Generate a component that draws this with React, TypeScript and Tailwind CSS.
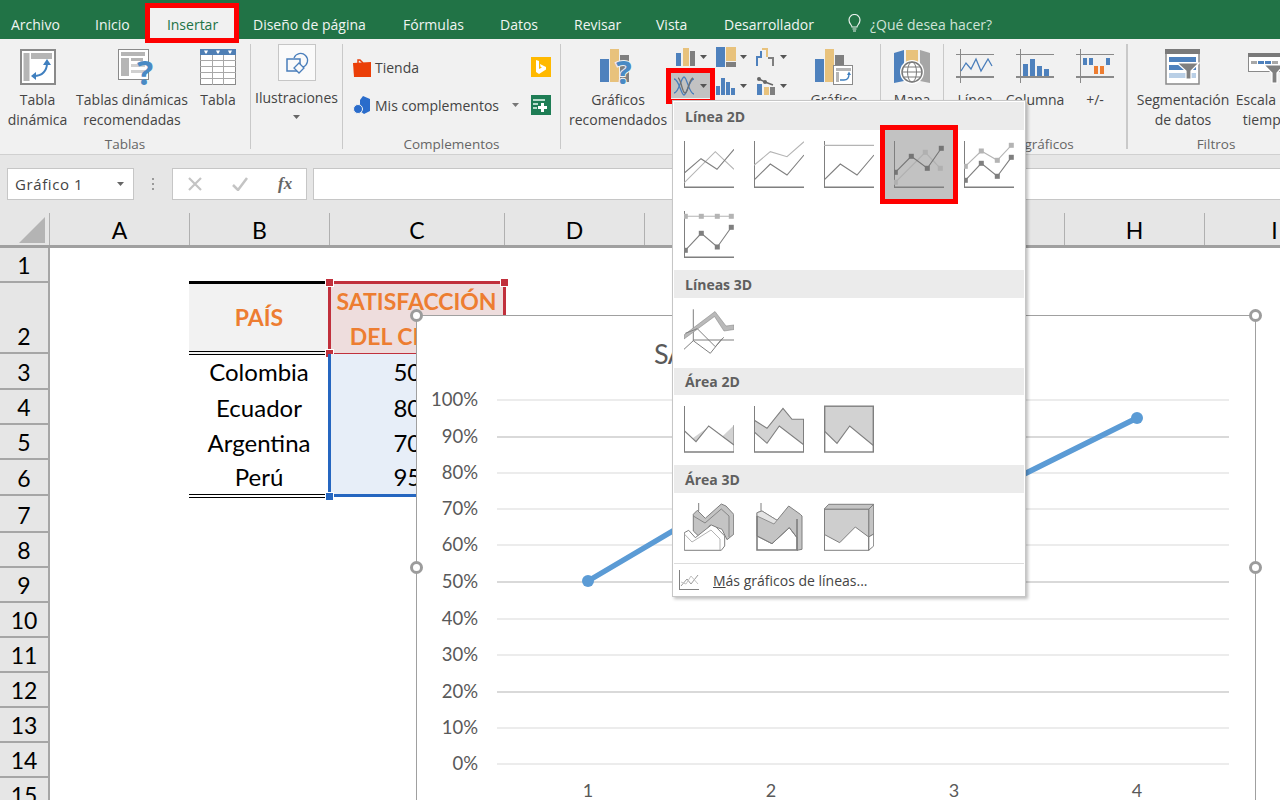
import React from "react";

const D = "#7f7f7f";
const L = "#b4b4b4";
const B = "#4e81bd";
const Y = "#e8c27c";
const G = "#7f7f7f";

type P = [number, number][];
const pts = (p: P) => p.map((q) => q.join(",")).join(" ");

function Poly({ p, c = D, w = 1.1 }: { p: P; c?: string; w?: number }) {
  return <polyline points={pts(p)} fill="none" stroke={c} strokeWidth={w} />;
}
function Marks({ p, c = D }: { p: P; c?: string }) {
  return (
    <>
      <polyline points={pts(p)} fill="none" stroke={c} strokeWidth={1.1} />
      {p.map((q, i) => (
        <rect key={i} x={q[0] - 2.5} y={q[1] - 2.5} width={5} height={5} fill={c} />
      ))}
    </>
  );
}
function Axes({ top = 1 }: { top?: number }) {
  return (
    <>
      <line x1={0.5} y1={top} x2={0.5} y2={48} stroke={D} strokeWidth={1} />
      <line x1={0} y1={47.3} x2={50} y2={47.3} stroke={D} strokeWidth={1.6} />
    </>
  );
}
function Ico({ children }: { children: React.ReactNode }) {
  return (
    <svg width={50} height={50} viewBox="0 0 50 50" className="block">
      {children}
    </svg>
  );
}

const dk2: P = [[0, 40], [16.3, 24], [33, 35], [50, 15]];

const lineIcons = [
  <Ico key="a">
    <Axes />
    <Poly c={L} p={[[0.3, 42.7], [31.3, 11.7], [50, 29.3]]} />
    <Poly p={[[0.3, 33], [17, 18.7], [33, 29.3], [50, 9.3]]} />
  </Ico>,
  <Ico key="b">
    <Axes />
    <Poly c={L} p={[[0, 25.3], [16.3, 11.7], [33, 16.7], [50, 1.7]]} />
    <Poly p={dk2} />
  </Ico>,
  <Ico key="c">
    <Axes />
    <line x1={0} y1={5.3} x2={50} y2={5.3} stroke={L} strokeWidth={1.2} />
    <Poly p={dk2} />
  </Ico>,
  <Ico key="d">
    <Axes />
    <Marks c="#b0b0b0" p={[[1.3, 42.3], [31.3, 12.3], [46.3, 28.3]]} />
    <Marks c="#757575" p={[[1.3, 32.3], [17.3, 16.3], [33.3, 28.3], [47.3, 8.3]]} />
  </Ico>,
  <Ico key="e">
    <Axes />
    <Marks c={L} p={[[1.3, 26.3], [17.3, 11], [33.3, 20.3], [47.3, 5.3]]} />
    <Marks p={[[1.3, 40.3], [17.3, 23.3], [33.3, 36.3], [47.3, 17.3]]} />
  </Ico>,
  <Ico key="f">
    <Axes />
    <Marks c={L} p={[[1.3, 6.3], [17.3, 6.3], [33.3, 6.3], [47.3, 6.3]]} />
    <Marks p={[[1.3, 40.3], [17.3, 23.3], [33.3, 37], [47.3, 17.3]]} />
  </Ico>,
];

const line3d = (
  <Ico>
    <line x1={9.3} y1={1.3} x2={9.3} y2={33} stroke={D} />
    <line x1={9.3} y1={32} x2={50} y2={32} stroke={D} />
    <polygon points="0,27 31,3.5 42,18 50,17 50,21.5 40,23 30.5,8.5 0,31" fill="#b9b9b9" stroke="#8c8c8c" strokeWidth={0.6} />
    <Poly p={[[1.3, 25.3], [13.3, 20.7], [31.3, 38.7], [39.7, 29.3]]} w={1} />
    <Poly p={[[0, 41.3], [9.3, 32.7], [26.3, 45.3], [38, 30.7]]} w={1} />
  </Ico>
);

const AF = "#d2d2d2";
const area2d = [
  <Ico key="a">
    <polygon points="8.7,33.3 24.7,21.7 12,36.7" fill={AF} />
    <polygon points="38,31.7 50,20.3 50,40" fill={AF} />
    <Poly p={[[0.3, 25.7], [12, 36.7], [24.7, 21], [50, 40]]} />
    <line x1={0.5} y1={1} x2={0.5} y2={47} stroke={D} />
    <line x1={50} y1={20} x2={50} y2={47} stroke={D} />
    <line x1={0} y1={47} x2={50} y2={47} stroke={D} strokeWidth={1.4} />
  </Ico>,
  <Ico key="b">
    <polygon points="0,15 13,23.3 29,3.3 38,14.3 50,14.3 50,40 25.3,21 13,38.3 0,26.7" fill={AF} />
    <Poly p={[[0, 15], [13, 23.3], [29, 3.3], [38, 14.3], [50, 14.3]]} />
    <Poly p={[[0, 26.7], [13, 38.3], [25.3, 21], [50, 40]]} />
    <line x1={0.5} y1={1} x2={0.5} y2={47} stroke={D} />
    <line x1={49.5} y1={14} x2={49.5} y2={47} stroke={D} />
    <line x1={0} y1={47} x2={50} y2={47} stroke={D} strokeWidth={1.4} />
  </Ico>,
  <Ico key="c">
    <polygon points="0,1 50,1 50,41 25.7,21 13,38.3 0,25.7" fill={AF} />
    <Poly p={[[0, 25.7], [13, 38.3], [25.7, 21], [50, 41]]} />
    <rect x={0.7} y={1.2} width={48.6} height={45.8} fill="none" stroke={D} strokeWidth={1.4} />
  </Ico>,
];

const area3d = [
  <Ico key="a">
    <line x1={14.7} y1={0} x2={14.7} y2={8} stroke={D} />
    <polygon points="9.3,11.3 13.3,7.3 21.3,15.3 37.3,1 42,3 49.7,11.3 49.7,31.3 43,36.7 38,26.3 26.3,22 16.3,34.7 9.3,28" fill="#c4c4c4" stroke={D} strokeWidth={1} />
    <Poly p={[[9.3, 13], [21, 20], [37.3, 6], [45, 13], [45, 34]]} w={0.9} />
    <polygon points="0.3,29.7 4.7,27.3 11.3,34.7 27.3,22 32,24 40.7,33 40.7,43 37.3,47.3 0.3,47.3" fill="#fff" stroke={D} strokeWidth={1} />
    <Poly p={[[0.3, 31], [8, 39], [27, 27], [36, 36], [36, 47]]} w={0.8} c="#a0a0a0" />
  </Ico>,
  <Ico key="b">
    <line x1={7} y1={0} x2={7} y2={8} stroke={D} />
    <polygon points="3,9.7 8,8 23,17.3 34.7,3 46.3,11.3 48,13 48,46.3 43,47.3 43,34.7 35.3,24.7 18,40.7 3,33" fill="#c4c4c4" stroke={D} strokeWidth={1} />
    <polygon points="3,13 3,9.7 8,8 23,17.3 20,21" fill="#e4e4e4" stroke={D} strokeWidth={0.8} />
    <polyline points="3,33 18,40.7 35.3,24.7 43,34.7" fill="none" stroke={D} />
    <polyline points="3,13 3,47 43,47 43,16" fill="none" stroke={D} strokeWidth={1.6} />
  </Ico>,
  <Ico key="c">
    <polygon points="0,6.3 4.7,1.3 49.7,1.3 44.7,6.3" fill="#c4c4c4" stroke={D} />
    <polygon points="44.7,6.3 49.7,1.3 49.7,31 44.7,34" fill="#c4c4c4" stroke={D} />
    <polygon points="44.7,34 49.7,31 49.7,43 44.7,47.3" fill="#fff" stroke={D} />
    <polygon points="0,6.3 44.7,6.3 44.7,34 31.3,24 15.7,39.7 0,31.3" fill="#cecece" />
    <rect x={0.5} y={6.3} width={44.2} height={41} fill="none" stroke={D} />
    <polyline points="0,31.3 15.7,39.7 31.3,24 44.7,34" fill="none" stroke={D} />
  </Ico>,
];

function Caret({ c = "#555" }: { c?: string }) {
  return (
    <svg width={7} height={4} viewBox="0 0 7 4" className="block shrink-0">
      <polygon points="0,0 7,0 3.5,4" fill={c} />
    </svg>
  );
}

function S36({ children, w = 36, h = 36, className = "" }: { children: React.ReactNode; w?: number; h?: number; className?: string }) {
  return (
    <svg width={w} height={h} viewBox={`0 0 ${w} ${h}`} className={`block shrink-0 overflow-visible ${className}`}>
      {children}
    </svg>
  );
}

const PivotIcon = (
  <S36>
    <rect x={1} y={1} width={34} height={34} fill="#fff" stroke="#8a8a8a" strokeWidth={2} />
    <rect x={3.5} y={4} width={6} height={28} fill="#b5b5b5" />
    <rect x={11} y={4} width={21} height={6} fill="#b5b5b5" />
    <path d="M14 27c8 0 13-5 13-13" fill="none" stroke="#3f7fbf" strokeWidth={2} />
    <polygon points="27,10 23,16 31,16" fill="#3f7fbf" />
    <polygon points="11,27 16,23 16,31" fill="#3f7fbf" />
  </S36>
);

const RecIcon = (
  <S36 className="ml-[7px]">
    <rect x={0.5} y={0.5} width={30} height={30} fill="#fff" stroke="#8a8a8a" />
    <rect x={3} y={3} width={24} height={4} fill="#b5b5b5" />
    <rect x={3} y={9} width={8} height={18} fill="#b5b5b5" />
    <rect x={13} y={9} width={12} height={3} fill="#b5b5b5" />
    <rect x={13} y={15} width={14} height={3} fill="#d0d0d0" />
    <rect x={13} y={21} width={14} height={3} fill="#d0d0d0" />
    <text x={19} y={36} fontSize={34} fontWeight={700} fontFamily="Open Sans, sans-serif" fill="#4a8ac4">?</text>
  </S36>
);

const TableIcon = (
  <S36>
    <rect x={0.5} y={0.5} width={35} height={35} fill="#fff" stroke="#8a8a8a" />
    <rect x={0} y={0} width={36} height={6} fill="#4f7fb5" />
    {[4, 16, 28].map((x) => (
      <polygon key={x} points={`${x},1.5 ${x + 4},1.5 ${x + 2.6},4.6 ${x + 1.4},4.6`} fill="#fff" />
    ))}
    {[11, 17, 23, 29].map((y) => (
      <line key={y} x1={0} y1={y + 0.5} x2={36} y2={y + 0.5} stroke="#a8a8a8" />
    ))}
    <line x1={12.5} y1={6} x2={12.5} y2={36} stroke="#a8a8a8" />
    <line x1={23.5} y1={6} x2={23.5} y2={36} stroke="#a8a8a8" />
  </S36>
);

const BarsBig = (
  <>
    <rect x={0} y={10} width={9} height={23} fill={B} />
    <rect x={10} y={0} width={9} height={33} fill={Y} />
    <rect x={20} y={6} width={9} height={27} fill={G} />
  </>
);

const RecChart = (
  <S36>
    {BarsBig}
    <text x={16} y={35} fontSize={33} fontWeight={700} fontFamily="Open Sans, sans-serif" fill="#4a8ac4" stroke="#f1f1f1" strokeWidth={2} paintOrder="stroke">?</text>
  </S36>
);

const PivotChart = (
  <S36 w={38}>
    {BarsBig}
    <rect x={18.5} y={16.5} width={19} height={19} fill="#fff" stroke="#8a8a8a" />
    <rect x={21} y={19} width={15} height={3} fill="#b5b5b5" />
    <rect x={21} y={23} width={3} height={10} fill="#b5b5b5" />
    <path d="M25 31h4c3 0 5-2 5-6" fill="none" stroke="#3f7fbf" strokeWidth={1.3} />
    <polygon points="34,22.5 32,26 36,26" fill="#3f7fbf" />
  </S36>
);

const MapIcon = (
  <S36>
    <polygon points="0,4 10,1 10,32 0,34" fill={B} />
    <polygon points="12,1 24,1 24,32 12,32" fill={Y} />
    <polygon points="26,1 36,4 36,34 26,32" fill="#a6a6a6" />
    <circle cx={18} cy={23} r={12} fill="#fff" />
    <circle cx={18} cy={23} r={10} fill="#fff" stroke="#7a7a7a" strokeWidth={1.5} />
    <ellipse cx={18} cy={23} rx={4.5} ry={10} fill="none" stroke="#7a7a7a" />
    <line x1={8} y1={23} x2={28} y2={23} stroke="#7a7a7a" />
    <line x1={10} y1={18} x2={26} y2={18} stroke="#7a7a7a" />
    <line x1={10} y1={28} x2={26} y2={28} stroke="#7a7a7a" />
  </S36>
);

function SparkFrame({ children }: { children: React.ReactNode }) {
  return (
    <S36 w={38}>
      <line x1={0} y1={5.5} x2={38} y2={5.5} stroke="#8a8a8a" />
      <line x1={4.5} y1={0} x2={4.5} y2={34} stroke="#8a8a8a" />
      <line x1={0} y1={28} x2={38} y2={28} stroke="#8a8a8a" strokeWidth={2} />
      {children}
    </S36>
  );
}

const SliceIcon = (
  <S36>
    <rect x={1} y={1} width={33} height={34} fill="#fff" stroke="#8a8a8a" strokeWidth={1.5} />
    <rect x={0} y={0} width={35} height={5} fill="#7a7a7a" />
    <rect x={4} y={8} width={27} height={5} fill={B} />
    <rect x={4} y={16} width={27} height={5} fill={B} />
    <rect x={4} y={24} width={27} height={5} fill="#b9cfe6" />
    <polygon points="12,14 34,14 26,22 26,30 21,30 21,22" fill="#808080" stroke="#fff" strokeWidth={1.2} />
  </S36>
);

const TimeIcon = (
  <S36>
    <rect x={0.5} y={4.5} width={34} height={18} fill="#fff" stroke="#8a8a8a" />
    <rect x={0} y={4} width={35} height={4} fill="#7a7a7a" />
    <rect x={3} y={12} width={6} height={3} fill="#a8a8a8" />
    <rect x={10} y={12} width={6} height={3} fill={B} />
    <rect x={17} y={12} width={6} height={3} fill={B} />
    <rect x={24} y={12} width={6} height={3} fill="#a8a8a8" />
    <polygon points="16,16 36,16 29,24 29,34 24,34 24,24" fill="#808080" stroke="#fff" strokeWidth={1.2} />
  </S36>
);

function BigBtn({ icon, lines, w }: { icon: React.ReactNode; lines: string[]; w: string }) {
  return (
    <div className={`${w} shrink-0 flex flex-col items-center pt-[5px]`}>
      <div className="h-[36px] flex justify-center">{icon}</div>
      <div className="mt-[5px] text-center text-[14px] leading-[20px] text-[#444] whitespace-nowrap">
        {lines.map((l) => (
          <div key={l}>{l}</div>
        ))}
      </div>
    </div>
  );
}

function Group({ w, label, children }: { w: string; label: string; children: React.ReactNode }) {
  return (
    <div className={`${w} shrink-0 h-full flex flex-col pt-[5px]`}>
      <div className="h-[90px] flex">{children}</div>
      <div className="h-[20px] leading-[20px] text-center text-[13.5px] text-[#666] whitespace-nowrap">{label}</div>
    </div>
  );
}
const Sep = () => <div className="w-px shrink-0 my-[5px] bg-[#c9c9c9]" />;

function Mini({ children, hot }: { children: React.ReactNode; hot?: boolean }) {
  return (
    <div className={`relative w-[40px] h-[25px] flex items-center pl-[5px] ${hot ? "bg-[#c2c2c2]" : ""}`}>
      <svg width={22} height={20} viewBox="0 0 22 20" className="block shrink-0 overflow-visible">
        {children}
      </svg>
      <div className="ml-[2px]">
        <Caret />
      </div>
      {hot && <div className="absolute -left-[5px] -right-[4px] -top-[5px] -bottom-[6px] border-[5px] border-[#fe0000]" />}
    </div>
  );
}

function Section({ title, cells, h = "h-[28px]" }: { title: string; cells: React.ReactNode[]; h?: string }) {
  return (
    <>
      <div className={`${h} bg-[#ebebeb] pl-[11px] flex items-center text-[14px] font-bold text-[#5f5f5f]`}>{title}</div>
      <div className="flex flex-wrap">
        {cells.map((c, i) => {
          const hot = title === "Línea 2D" && i === 3;
          return (
            <div key={i} className={`relative w-[70px] h-[70px] flex items-center justify-center ${hot ? "bg-[#c2c2c2]" : ""}`}>
              {c}
              {hot && <div className="absolute -left-[4px] -right-[4px] -top-[5px] -bottom-[4px] border-[5px] border-[#fe0000]" />}
            </div>
          );
        })}
      </div>
    </>
  );
}

const rows: { n: string; h: string; b?: string; c?: string }[] = [
  { n: "1", h: "h-[35px]" },
  { n: "2", h: "h-[71px]" },
  { n: "3", h: "h-[36px]", b: "Colombia", c: "50%" },
  { n: "4", h: "h-[35px]", b: "Ecuador", c: "80%" },
  { n: "5", h: "h-[35px]", b: "Argentina", c: "70%" },
  { n: "6", h: "h-[36px]", b: "Perú", c: "95%" },
  { n: "7", h: "h-[37px]" },
  { n: "8", h: "h-[35px]" },
  { n: "9", h: "h-[35px]" },
  { n: "10", h: "h-[35px]" },
  { n: "11", h: "h-[35px]" },
  { n: "12", h: "h-[35px]" },
  { n: "13", h: "h-[35px]" },
  { n: "14", h: "h-[35px]" },
  { n: "15", h: "h-[35px]" },
];

const columns: [string, string][] = [
  ["A", "w-[140px]"], ["B", "w-[140px]"], ["C", "w-[175px]"], ["D", "w-[140px]"],
  ["E", "w-[140px]"], ["F", "w-[140px]"], ["G", "w-[140px]"], ["H", "w-[140px]"], ["I", "w-[140px]"],
];

const Handle = ({ c, pos }: { c: string; pos: string }) => (
  <div className={`absolute w-[9px] h-[9px] border border-white ${c} ${pos}`} />
);
const Ring = ({ pos }: { pos: string }) => (
  <div className={`absolute w-[13px] h-[13px] rounded-full bg-white border-[3px] border-[#9c9c9c] ${pos}`} />
);

const gridY = [400, 437, 473, 509, 545, 582, 619, 655, 692, 728, 764];
const thick = [437, 582, 692];
const ser: P = [[588, 581], [771, 473], [954, 509], [1137, 418]];

export default function App() {
  return (
    <div className="relative w-[1280px] h-[800px] overflow-hidden bg-white font-['Open_Sans',sans-serif]">
      {/* tabs */}
      <div className="relative z-10 h-[39px] bg-[#217346] flex items-end pl-[11px] text-[14px] text-white">
        {[
          ["Archivo", "w-[84px]"],
          ["Inicio", "w-[55px]"],
        ].map(([t, w]) => (
          <div key={t} className={`${w} h-[39px] leading-[50px] shrink-0 text-[#f0f5f2]`}>{t}</div>
        ))}
        <div className="relative w-[85px] h-[31px] shrink-0 bg-[#f1f1f1] text-[#217346] text-center leading-[34px]">
          Insertar
          <div className="absolute -left-[5px] -right-[4px] -top-[5px] -bottom-[4px] border-[5px] border-[#fe0000]" />
        </div>
        <div className="w-[18px] shrink-0" />
        {[
          ["Diseño de página", "w-[150px]"],
          ["Fórmulas", "w-[97px]"],
          ["Datos", "w-[74px]"],
          ["Revisar", "w-[82px]"],
          ["Vista", "w-[68px]"],
          ["Desarrollador", "w-[124px]"],
        ].map(([t, w]) => (
          <div key={t} className={`${w} h-[39px] leading-[50px] shrink-0 whitespace-nowrap text-[#f0f5f2]`}>{t}</div>
        ))}
        <div className="w-[22px] h-[39px] shrink-0 pt-[14px]">
          <svg width={13} height={18} viewBox="0 0 13 18" className="block">
            <path d="M4 13c0-2-3-3-3-7a5.5 5.5 0 0 1 11 0c0 4-3 5-3 7z" fill="none" stroke="#e8f0ec" strokeWidth={1.2} />
            <line x1={4.5} y1={15} x2={8.5} y2={15} stroke="#e8f0ec" />
            <line x1={5} y1={17} x2={8} y2={17} stroke="#e8f0ec" />
          </svg>
        </div>
        <div className="h-[39px] leading-[50px] text-[#cfe3d8] whitespace-nowrap">¿Qué desea hacer?</div>
      </div>

      {/* ribbon */}
      <div className="h-[115px] bg-[#f1f1f1] flex overflow-hidden">
        <Group w="w-[250px]" label="Tablas">
          <BigBtn w="w-[75px]" icon={PivotIcon} lines={["Tabla", "dinámica"]} />
          <BigBtn w="w-[114px]" icon={RecIcon} lines={["Tablas dinámicas", "recomendadas"]} />
          <BigBtn w="w-[58px]" icon={TableIcon} lines={["Tabla"]} />
        </Group>
        <Sep />
        <Group w="w-[91px]" label="">
          <div className="w-full flex flex-col items-center">
            <div className="w-[38px] h-[37px] bg-[#fafafa] border border-[#c6c6c6] flex items-center justify-center">
              <svg width={24} height={24} viewBox="0 0 24 24" className="block">
                <rect x={2} y={8} width={13} height={12} fill="none" stroke="#4a7ebb" strokeWidth={1.5} />
                <path d="M9 7a7 7 0 1 1 9 9" fill="none" stroke="#4a7ebb" strokeWidth={1.3} />
                <polygon points="14,12 19,17 14,22 9,17" fill="#fafafa" stroke="#4a7ebb" strokeWidth={1.3} />
              </svg>
            </div>
            <div className="mt-[7px] h-[20px] text-[14px] leading-[20px] text-[#444]">Ilustraciones</div>
            <div className="mt-[7px]"><Caret c="#666" /></div>
          </div>
        </Group>
        <Sep />
        <Group w="w-[217px]" label="Complementos">
          <div className="w-full pl-[10px] pr-[9px] pt-[12px] flex flex-col gap-[16px]">
            <div className="h-[22px] flex items-center text-[14px] text-[#444]">
              <svg width={18} height={20} viewBox="0 0 18 20" className="block shrink-0">
                <path d="M5 6V3h2l3 3" fill="none" stroke="#e8400c" strokeWidth={1.5} />
                <polygon points="0,6 18,5 18,20 1,20" fill="#eb3f08" />
              </svg>
              <span className="ml-[4px]">Tienda</span>
              <div className="ml-auto w-[20px] h-[20px] bg-[#ffb900] flex items-center justify-center">
                <svg width={12} height={14} viewBox="0 0 12 14" className="block">
                  <path d="M1 0l3 1v8l3-1.5-1.5-.8L5 4l6 3v2.5L4 14l-3-2z" fill="#fff" />
                </svg>
              </div>
            </div>
            <div className="h-[22px] flex items-center text-[14px] text-[#444]">
              <svg width={18} height={18} viewBox="0 0 18 18" className="block shrink-0">
                <polygon points="10,0 17,3 17,15 11,18 7,15 7,4" fill="#2a6ccb" />
                <circle cx={5} cy={13} r={4.5} fill="#2a6ccb" stroke="#f1f1f1" />
              </svg>
              <span className="ml-[4px] whitespace-nowrap">Mis complementos</span>
              <div className="ml-[13px]"><Caret c="#777" /></div>
              <div className="ml-auto w-[20px] h-[20px] bg-[#1e7d55] flex items-center justify-center">
                <svg width={16} height={16} viewBox="0 0 16 16" className="block">
                  <rect x={0} y={2} width={12} height={2} fill="#b7dccb" />
                  <rect x={0} y={6} width={5} height={2} fill="#b7dccb" />
                  <rect x={0} y={10} width={4} height={2} fill="#b7dccb" />
                  <path d="M8 6h3v3h3v3h-3v3H8v-3H5V9h3z" fill="#fff" />
                </svg>
              </div>
            </div>
          </div>
        </Group>
        <Sep />
        <Group w="w-[319px]" label="Gráficos">
          <div className="w-[110px] shrink-0 pl-[4px]">
            <BigBtn w="w-[106px]" icon={RecChart} lines={["Gráficos", "recomendados"]} />
          </div>
          <div className="w-[120px] shrink-0 grid grid-cols-3 gap-y-[4px] content-start">
            <Mini>
              <rect x={0} y={6} width={5} height={13} fill={B} />
              <rect x={7} y={1} width={6} height={18} fill={Y} />
              <rect x={14} y={4} width={5} height={15} fill={G} />
            </Mini>
            <Mini>
              <rect x={0} y={0} width={9} height={20} fill={B} />
              <rect x={10} y={0} width={10} height={14} fill={Y} />
              <rect x={10} y={15} width={10} height={5} fill={G} />
            </Mini>
            <Mini>
              <path d="M1 19V10h4V4" fill="none" stroke={B} strokeWidth={2} />
              <path d="M6 2h5v8" fill="none" stroke={Y} strokeWidth={2} />
              <path d="M12 11h5v8" fill="none" stroke={G} strokeWidth={2} />
            </Mini>
            <Mini hot>
              <path d="M-2 17C3 17 5 1 8 1s5 17 10 17" fill="none" stroke="#4a7ebb" strokeWidth={1.3} />
              <path d="M-2 3C3 3 5 19 8 19s5-16 10-16" fill="none" stroke="#4a7ebb" strokeWidth={1.3} />
              <path d="M2 2c3 0 4 15 7 15s4-14 8-15" fill="none" stroke="#6f6f6f" strokeWidth={1.3} />
            </Mini>
            <Mini>
              <rect x={0} y={10} width={4} height={9} fill={B} />
              <rect x={5} y={2} width={4} height={17} fill={B} />
              <rect x={10} y={6} width={4} height={13} fill={B} />
              <rect x={15} y={12} width={4} height={7} fill={B} />
            </Mini>
            <Mini>
              <rect x={1} y={8} width={5} height={11} fill={B} />
              <rect x={8} y={11} width={5} height={8} fill={Y} />
              <rect x={14} y={11} width={5} height={8} fill={G} />
              <path d="M3 3l6 3 8 3" fill="none" stroke="#666" strokeWidth={1.5} />
              <circle cx={3} cy={3} r={2} fill="#666" />
              <circle cx={9} cy={6} r={2} fill="#666" />
            </Mini>
          </div>
          <BigBtn w="w-[86px]" icon={PivotChart} lines={["Gráfico", "dinámico"]} />
        </Group>
        <Sep />
        <Group w="w-[62px]" label="Paseo">
          <BigBtn w="w-[62px]" icon={MapIcon} lines={["Mapa"]} />
        </Group>
        <Sep />
        <Group w="w-[183px]" label="Minigráficos">
          <div className="w-px shrink-0" />
          <BigBtn
            w="w-[60px]"
            lines={["Línea"]}
            icon={
              <SparkFrame>
                <polyline points="5,22 10,14 15,20 20,10 25,22 32,10 36,17" fill="none" stroke="#4a7ebb" strokeWidth={1.3} />
              </SparkFrame>
            }
          />
          <BigBtn
            w="w-[60px]"
            lines={["Columna"]}
            icon={
              <SparkFrame>
                <rect x={7} y={15} width={5} height={12} fill={B} />
                <rect x={14} y={10} width={5} height={17} fill={B} />
                <rect x={21} y={17} width={5} height={10} fill={B} />
                <rect x={28} y={20} width={5} height={7} fill={B} />
              </SparkFrame>
            }
          />
          <BigBtn
            w="w-[60px]"
            lines={["+/-"]}
            icon={
              <SparkFrame>
                <rect x={7} y={9} width={4} height={7} fill={B} />
                <rect x={13} y={9} width={4} height={7} fill={B} />
                <rect x={18} y={17} width={4} height={8} fill="#ed7d31" />
                <rect x={24} y={17} width={4} height={8} fill="#ed7d31" />
                <rect x={30} y={9} width={4} height={7} fill={B} />
              </SparkFrame>
            }
          />
        </Group>
        <div className="w-[2px] shrink-0 my-[5px] bg-[#c9c9c9] -ml-px" />
        <Group w="w-[176px]" label="Filtros">
          <BigBtn w="w-[110px]" icon={SliceIcon} lines={["Segmentación", "de datos"]} />
          <BigBtn w="w-[56px]" icon={TimeIcon} lines={["Escala de", "tiempo"]} />
        </Group>
      </div>

      {/* formula bar */}
      <div className="h-[46px] bg-[#e6e6e6] border-t border-[#d0d0d0] flex items-end pl-[7px]">
        <div className="w-[127px] h-[32px] shrink-0 bg-white border border-[#c6c6c6] flex items-center justify-between pl-[7px] pr-[9px] text-[15px] tracking-[0.6px] text-[#444]">
          <span>Gráfico 1</span>
          <Caret c="#666" />
        </div>
        <div className="w-[38px] h-[32px] shrink-0 flex flex-col items-center justify-center gap-[3px]">
          <div className="w-[2px] h-[2px] bg-[#9a9a9a]" />
          <div className="w-[2px] h-[2px] bg-[#9a9a9a]" />
          <div className="w-[2px] h-[2px] bg-[#9a9a9a]" />
        </div>
        <div className="w-[135px] h-[32px] shrink-0 bg-white border border-[#c6c6c6] flex items-center pl-[15px]">
          <svg width={14} height={14} viewBox="0 0 14 14" className="block">
            <path d="M1 1l12 12M13 1L1 13" stroke="#c4c4c4" strokeWidth={2.2} />
          </svg>
          <svg width={16} height={14} viewBox="0 0 16 14" className="block ml-[30px]">
            <path d="M1 8l5 5L15 1" fill="none" stroke="#c4c4c4" strokeWidth={2.5} />
          </svg>
          <span className="ml-[30px] text-[17px] italic font-bold font-['Liberation_Serif',serif] text-[#666]">fx</span>
        </div>
        <div className="w-[6px] shrink-0" />
        <div className="flex-1 h-[32px] bg-white border border-[#c6c6c6] border-r-0" />
      </div>

      {/* column headers */}
      <div className="h-[48px] bg-[#e6e6e6] border-b-[3px] border-[#a0a0a0] flex font-['Lato',sans-serif] text-[23px] text-black">
        <div className="w-[50px] shrink-0 border-r border-[#b0b0b0] mt-[13px] flex items-end justify-end pr-[4px] pb-[2px]">
          <svg width={26} height={26} viewBox="0 0 26 26" className="block">
            <polygon points="26,0 26,26 0,26" fill="#b4b4b4" />
          </svg>
        </div>
        {columns.map(([c, w]) => (
          <div key={c} className={`${w} shrink-0 mt-[13px] h-[32px] leading-[34px] text-center border-r border-[#b0b0b0]`}>{c}</div>
        ))}
      </div>

      {/* rows */}
      <div className="font-['Lato',sans-serif] text-[24px] text-black">
        {rows.map((r) => (
          <div key={r.n} className={`${r.h} flex`}>
            <div className="w-[50px] shrink-0 bg-[#e6e6e6] border-r-2 border-b-2 border-[#a6a6a6] flex items-end justify-center leading-[31px] text-[23px]">{r.n}</div>
            <div className="w-[139px] shrink-0" />
            {r.n === "2" ? (
              <>
                <div className="w-[140px] shrink-0 -mt-[2px] -mb-px bg-[#f2f2f2] border-t-[3px] border-black">
                  <div className="h-full border-b-[4px] border-double border-black flex items-center justify-center font-bold text-[23px] text-[#ed7d31]">
                    PAÍS
                  </div>
                </div>
                <div className="relative w-[175px] shrink-0 bg-[#eedddd] text-center font-bold text-[23px] text-[#ed7d31] leading-[35px] pt-[1px] whitespace-nowrap">
                  <div>SATISFACCIÓN</div>
                  <div className="pl-[6px]">DEL CLIENTE</div>
                  <div className="absolute -left-[1px] -right-[2px] -top-[2px] -bottom-[2px] border-[3px] border-[#c1303c]" />
                  <Handle c="bg-[#c1303c]" pos="-left-[4px] -top-[5px]" />
                  <Handle c="bg-[#c1303c]" pos="-right-[5px] -top-[5px]" />
                  <Handle c="bg-[#c1303c]" pos="-left-[4px] -bottom-[4px]" />
                </div>
              </>
            ) : r.b ? (
              <>
                <div className={`w-[140px] shrink-0 flex items-center justify-center ${r.n === "6" ? "-mb-[2px] border-b-[4px] border-double border-black" : ""}`}>{r.b}</div>
                <div className={`relative w-[175px] shrink-0 bg-[#e7eef8] border-l-[3px] border-[#2566c0] -ml-px flex items-center justify-center ${r.n === "6" ? "-mb-px border-b-[3px]" : ""}`}>
                  {r.c}
                  {r.n === "6" && <Handle c="bg-[#2566c0]" pos="-left-[6px] -bottom-[7px]" />}
                </div>
              </>
            ) : null}
          </div>
        ))}
      </div>

      {/* chart */}
      <div className="absolute left-[416px] top-[315px] w-[840px] h-[520px] bg-white border border-[#a0a0a0] font-['Lato',sans-serif]">
        <div className="pl-[237px] pt-[18px] text-[27px] leading-[40px] tracking-[-0.5px] text-[#595959] whitespace-nowrap">SATISFACCIÓN DEL CLIENTE</div>
        <svg width={840} height={520} viewBox="416 315 840 520" className="absolute -left-px -top-px block">
          {gridY.map((y, i) => (
            <React.Fragment key={y}>
              <line x1={497} y1={y} x2={1229} y2={y} stroke="#d9d9d9" strokeWidth={thick.includes(y) ? 2 : 1} />
              <text x={478} y={y + 6} textAnchor="end" fontSize={18.5} fill="#595959" fontFamily="Lato, sans-serif">{`${100 - i * 10}%`}</text>
            </React.Fragment>
          ))}
          <polyline points={pts(ser)} fill="none" stroke="#5b9bd5" strokeWidth={5.5} strokeLinecap="round" />
          {ser.map((q, i) => (
            <React.Fragment key={i}>
              <circle cx={q[0]} cy={q[1]} r={6} fill="#5b9bd5" />
              <text x={q[0]} y={797} textAnchor="middle" fontSize={18} fill="#595959" fontFamily="Lato, sans-serif">{i + 1}</text>
            </React.Fragment>
          ))}
        </svg>
      </div>
      <Ring pos="left-[410px] top-[309px]" />
      <Ring pos="left-[1249px] top-[309px]" />
      <Ring pos="left-[410px] top-[561px]" />
      <Ring pos="left-[1249px] top-[561px]" />

      {/* dropdown */}
      <div className="absolute z-20 left-[672px] top-[100px] w-[354px] h-[497px] bg-white border border-[#c6c6c6] p-px shadow-[2px_2px_3px_rgba(0,0,0,0.25)]">
        <Section title="Línea 2D" cells={lineIcons} />
        <Section title="Líneas 3D" cells={[line3d]} />
        <Section title="Área 2D" cells={area2d} h="h-[27px]" />
        <Section title="Área 3D" cells={area3d} />
        <div className="h-[33px] border-t border-[#dcdcdc] flex items-center pl-[5px] text-[14px] text-[#444]">
          <svg width={20} height={20} viewBox="0 0 20 20" className="block shrink-0">
            <line x1={0.5} y1={0} x2={0.5} y2={20} stroke="#808080" />
            <line x1={0} y1={19.5} x2={20} y2={19.5} stroke="#808080" />
            <polyline points="2,16 8,9 12,14 19,5" fill="none" stroke="#9a9a9a" />
            <polyline points="2,12 7,14 12,6 19,14" fill="none" stroke="#c4c4c4" />
          </svg>
          <span className="ml-[14px] whitespace-nowrap"><span className="underline">M</span>ás gráficos de líneas...</span>
        </div>
      </div>
    </div>
  );
}
